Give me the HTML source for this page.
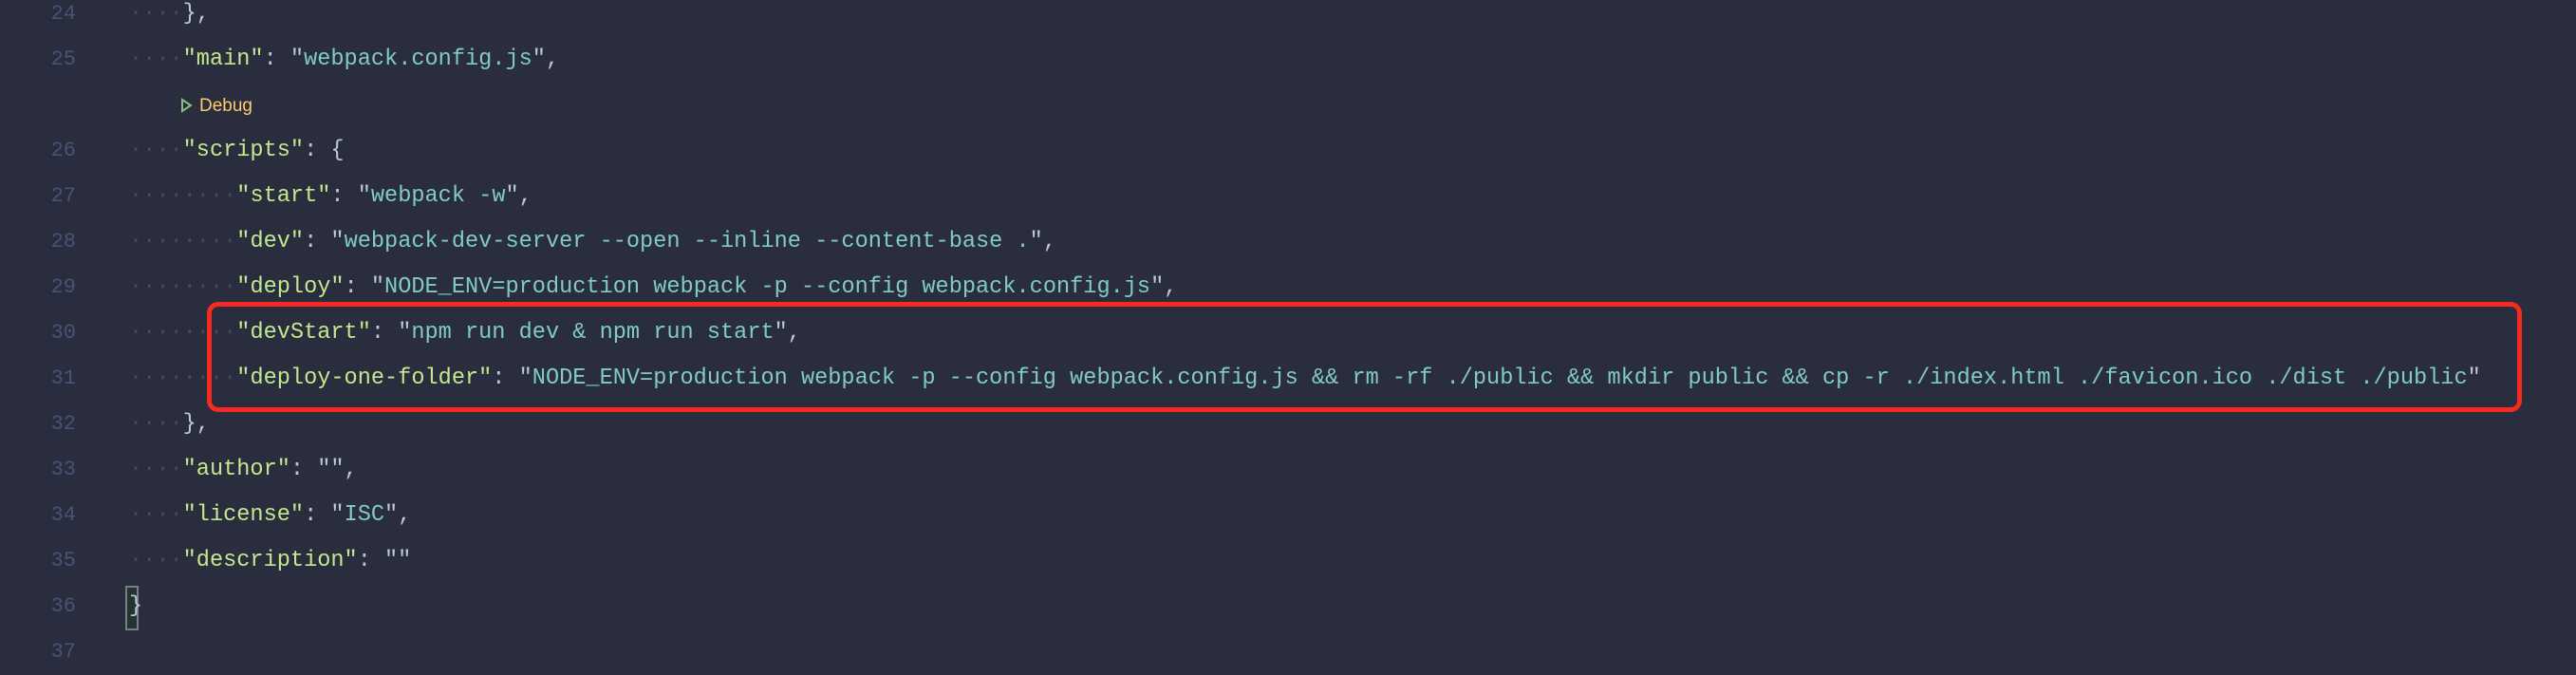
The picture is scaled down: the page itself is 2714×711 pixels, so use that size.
<!DOCTYPE html>
<html><head><meta charset="utf-8"><style>
html,body{margin:0;padding:0;}
body{width:2714px;height:696px;background:#292d3e;overflow:hidden;position:relative;font-family:"Liberation Mono",monospace;}
.l{position:absolute;left:0;height:48px;line-height:48px;font-size:23.6px;letter-spacing:0;white-space:pre;color:#bfc7d5;}
.n{position:absolute;left:0;width:80px;text-align:right;color:#4b5275;font-size:22px;}
.c{position:absolute;left:136px;}
.d{color:#454a60;}
.k{color:#c3e88d;}
.s{color:#80cbc4;}
.box{position:absolute;left:218px;top:318px;width:2429px;height:106px;border:5px solid #f52a22;border-radius:12px;}
.dbg{position:absolute;left:190px;top:98px;font-family:"Liberation Sans",sans-serif;font-size:19px;color:#ffcb6b;line-height:28px;}
.cur{position:absolute;left:132px;top:617px;width:10px;height:43px;border:2px solid #7a7d85;background:#233333;}
</style></head><body>
<div class="l" style="top:-9px"><span class="n">24</span><span class="c"><span class="d">····</span>},</span></div>
<div class="l" style="top:39px"><span class="n">25</span><span class="c"><span class="d">····</span><span class="k">"main"</span>: "<span class="s">webpack.config.js</span>",</span></div>
<div class="dbg"><svg width="14" height="16" viewBox="0 0 14 16" style="vertical-align:-2px;margin-right:6px"><path d="M2 2 L11 8 L2 14 Z" fill="none" stroke="#7fc47a" stroke-width="2"/></svg>Debug</div>
<div class="l" style="top:135px"><span class="n">26</span><span class="c"><span class="d">····</span><span class="k">"scripts"</span>: {</span></div>
<div class="l" style="top:183px"><span class="n">27</span><span class="c"><span class="d">········</span><span class="k">"start"</span>: "<span class="s">webpack -w</span>",</span></div>
<div class="l" style="top:231px"><span class="n">28</span><span class="c"><span class="d">········</span><span class="k">"dev"</span>: "<span class="s">webpack-dev-server --open --inline --content-base .</span>",</span></div>
<div class="l" style="top:279px"><span class="n">29</span><span class="c"><span class="d">········</span><span class="k">"deploy"</span>: "<span class="s">NODE_ENV=production webpack -p --config webpack.config.js</span>",</span></div>
<div class="l" style="top:327px"><span class="n">30</span><span class="c"><span class="d">········</span><span class="k">"devStart"</span>: "<span class="s">npm run dev &amp; npm run start</span>",</span></div>
<div class="l" style="top:375px"><span class="n">31</span><span class="c"><span class="d">········</span><span class="k">"deploy-one-folder"</span>: "<span class="s">NODE_ENV=production webpack -p --config webpack.config.js &amp;&amp; rm -rf ./public &amp;&amp; mkdir public &amp;&amp; cp -r ./index.html ./favicon.ico ./dist ./public</span>"</span></div>
<div class="l" style="top:423px"><span class="n">32</span><span class="c"><span class="d">····</span>},</span></div>
<div class="l" style="top:471px"><span class="n">33</span><span class="c"><span class="d">····</span><span class="k">"author"</span>: "",</span></div>
<div class="l" style="top:519px"><span class="n">34</span><span class="c"><span class="d">····</span><span class="k">"license"</span>: "<span class="s">ISC</span>",</span></div>
<div class="l" style="top:567px"><span class="n">35</span><span class="c"><span class="d">····</span><span class="k">"description"</span>: ""</span></div>
<div class="cur"></div>
<div class="l" style="top:615px"><span class="n">36</span><span class="c">}</span></div>
<div class="l" style="top:663px"><span class="n">37</span></div>
<div class="box"></div>
</body></html>
